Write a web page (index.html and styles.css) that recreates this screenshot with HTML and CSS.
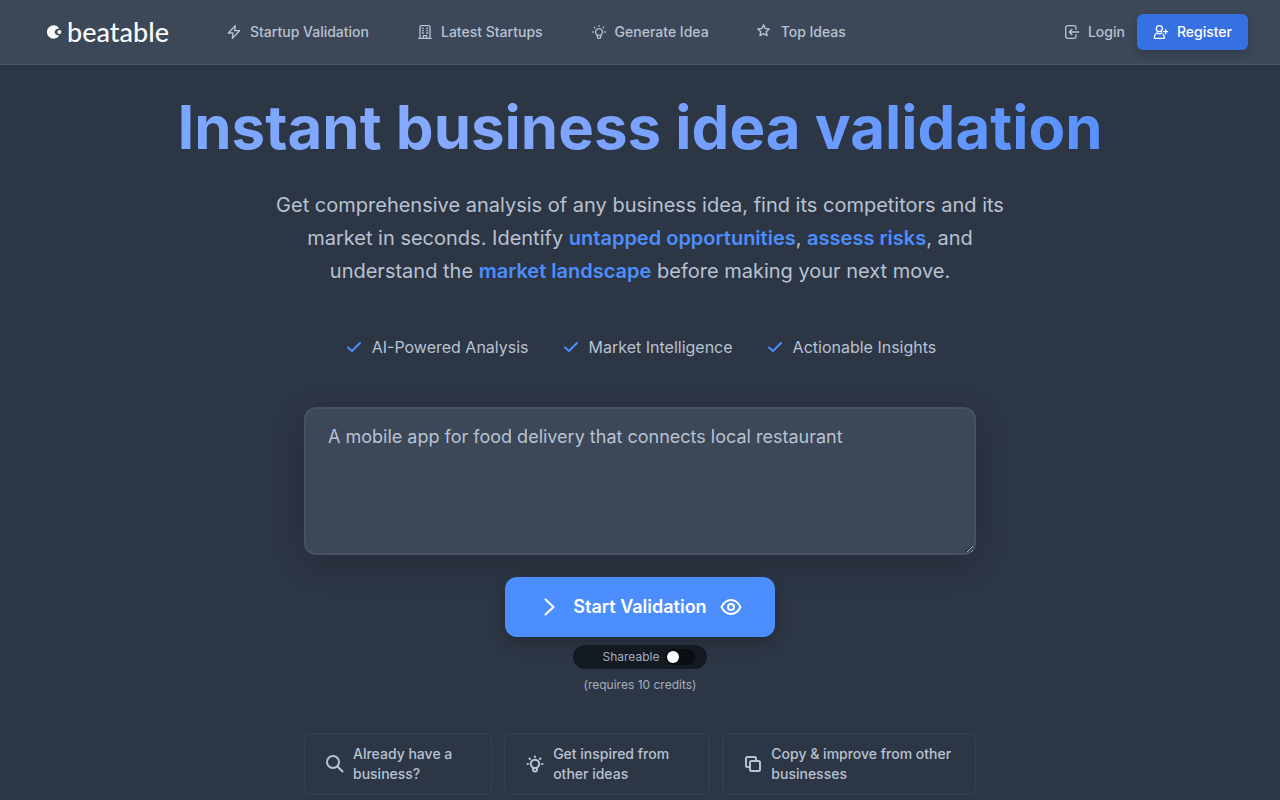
FILE: index.html
```html
<!DOCTYPE html>
<html lang="en">
  <head>
    <meta charset="UTF-8" />
    <meta name="viewport" content="width=device-width, initial-scale=1.0" />
    <title>Beatable - Instant business idea validation</title>
    <link rel="stylesheet" href="styles.css">
  </head>
  <body>
    <header class="header">
      <a href="#" class="logo">
        <svg class="logo-mark" viewBox="0 0 16 16">
          <path d="M11.600 3.500A6.700 6.700 0 1 0 11.600 12.500L11.800 11.200A3.300 3.300 0 1 1 11.800 4.800Z" fill="currentColor"/>
          <circle cx="12.400" cy="8" r="2.100" fill="currentColor"/>
        </svg>
        <span>beatable</span>
      </a>
      <nav class="nav">
        <a href="#" class="nav-link">
          <svg class="icon" viewBox="0 0 24 24"><path d="M14 2.500 3.500 13.500H10.500L9.500 21.500 20.500 10H13Z"/></svg>
          Startup Validation
        </a>
        <a href="#" class="nav-link">
          <svg class="icon" viewBox="0 0 24 24"><path d="M2.500 21.500H21.500M4.500 21.500V4.500Q4.500 2.500 6.500 2.500H17.500Q19.500 2.500 19.500 4.500V21.500M9.500 21.500V17.500H14.500V21.500M8 6.500H9.500M14.500 6.500H16M8 10H9.500M14.500 10H16M8 13.500H9.500M14.500 13.500H16"/></svg>
          Latest Startups
        </a>
        <a href="#" class="nav-link">
          <svg class="icon" viewBox="0 0 24 24"><path d="M9.500 17V16.600A5.200 5.200 0 1 1 14.500 16.600V17ZM9.500 17V19.500Q9.500 21.500 11.500 21.500H12.500Q14.500 21.500 14.500 19.500V17M12 2.500V3.500M2.500 12H3.500M20.500 12H21.500M5 5 5.800 5.800M19 5 18.200 5.800"/></svg>
          Generate Idea
        </a>
        <a href="#" class="nav-link">
          <svg class="icon icon-star" viewBox="1 1 27 27"><path d="M12 2.500 14.800 8.500 21.500 9.300 16.600 13.900 17.900 20.500 12 17.200 6.100 20.500 7.400 13.900 2.500 9.300 9.200 8.500Z"/></svg>
          Top Ideas
        </a>
      </nav>
      <div class="account">
        <a href="#" class="login">
          <svg class="icon" viewBox="0 0 24 24"><path d="M18 8V6Q18 2.500 14.500 2.500H6Q2.500 2.500 2.500 6V18Q2.500 21.500 6 21.500H14.500Q18 21.500 18 18V16M22 12H8.500M12 8 8 12 12 16"/></svg>
          Login
        </a>
        <a href="#" class="register">
          <svg class="icon" viewBox="0 0 24 24"><circle cx="9.500" cy="7" r="4.500"/><path d="M6 13.500Q2 15 2 21.500H17Q17 17.500 15 15.500M6 13.500Q9.500 16 13 13.500M19 8.500V14.500M16 11.500H22"/></svg>
          Register
        </a>
      </div>
    </header>

    <main class="hero">
      <h1 class="title">Instant business idea validation</h1>
      <p class="intro">
        Get comprehensive analysis of any business idea, find its competitors and its market in seconds. Identify <strong>untapped opportunities</strong>, <strong>assess risks</strong>, and understand the <strong>market landscape</strong> before making your next move.
      </p>

      <ul class="features">
        <li><svg class="check" viewBox="0 0 20 20"><path d="M4 10.500 8 14 16 6"/></svg>AI-Powered Analysis</li>
        <li><svg class="check" viewBox="0 0 20 20"><path d="M4 10.500 8 14 16 6"/></svg>Market Intelligence</li>
        <li><svg class="check" viewBox="0 0 20 20"><path d="M4 10.500 8 14 16 6"/></svg>Actionable Insights</li>
      </ul>

      <form class="idea-form">
        <textarea class="idea-input" aria-label="Business idea" placeholder="A mobile app for food delivery that connects local restaurant"></textarea>
        <button type="button" class="start">
          <svg class="start-icon" viewBox="0 0 24 24"><path d="M8.500 4.500 16.500 12 8.500 19.500"/></svg>
          <span>Start Validation</span>
          <svg class="start-icon" viewBox="0 0 24 24"><path d="M2.500 12Q6 5 12 5T21.500 12Q18 19 12 19T2.500 12Z"/><circle cx="12" cy="12" r="3"/></svg>
        </button>
        <label class="share">
          Shareable
          <input type="checkbox" class="switch">
        </label>
        <p class="credits">(requires 10 credits)</p>
      </form>

      <div class="links">
        <a href="#" class="link-card">
          <svg class="card-icon" viewBox="0 0 20 20"><circle cx="8" cy="8" r="6"/><path d="M12.500 12.500 17.500 17.500"/></svg>
          <span>Already have a business?</span>
        </a>
        <a href="#" class="link-card">
          <svg class="card-icon" viewBox="0 0 20 20"><path d="M8 14V13.600A4.200 4.200 0 1 1 12 13.600V14ZM8 14V15.500Q8 17.500 10 17.500T12 15.500V14M10 2.500V3M2.500 10H3M17 10H17.500M4.500 4.500 5 5M15.500 4.500 15 5"/></svg>
          <span>Get inspired from other ideas</span>
        </a>
        <a href="#" class="link-card">
          <svg class="card-icon" viewBox="0 0 20 20"><rect x="7" y="7" width="10" height="10" rx="1.500"/><path d="M6 13H4.500Q3 13 3 11.500V4.500Q3 3 4.500 3H11.500Q13 3 13 4.500V6"/></svg>
          <span>Copy &amp; improve from other businesses</span>
        </a>
      </div>
    </main>
  </body>
</html>
```

FILE: styles.css
```css
* {
  margin: 0;
  padding: 0;
  box-sizing: border-box;
}

:root {
  --bg: #2d3645;
  --surface: #3c4757;
  --line: #4a5565;
  --text: #b8c2d1;
  --blue: #4d8eff;
}

body {
  font-family: Inter, sans-serif;
  background: var(--bg);
  color: var(--text);
  min-height: 100vh;
  overflow: hidden;
}

a {
  color: inherit;
  text-decoration: none;
}

svg {
  flex-shrink: 0;
  fill: none;
  stroke: currentColor;
  stroke-width: 2;
  stroke-linecap: round;
  stroke-linejoin: round;
}

/* Header */
.header {
  display: flex;
  align-items: center;
  padding: 14px 32px;
  background: var(--surface);
  border-bottom: 1px solid var(--line);
  font-size: 14px;
  line-height: 20px;
  font-weight: 500;
}

.logo {
  display: flex;
  align-items: center;
  gap: 4px;
  margin-left: 15px;
  color: #f8fafc;
  font-family: Lato, sans-serif;
  font-size: 27px;
  line-height: 36px;
  font-weight: 500;
}

.logo-mark {
  width: 16px;
  height: 16px;
  stroke: none;
}

.nav {
  display: flex;
  gap: 48px;
  margin-left: 57px;
}

.nav-link,
.login,
.register {
  display: flex;
  align-items: center;
  gap: 8px;
}

.icon {
  width: 16px;
  height: 16px;
}

.icon-star {
  stroke-width: 2.4;
}

.account {
  display: flex;
  align-items: center;
  gap: 12px;
  margin-left: auto;
}

.register {
  padding: 8px 16px;
  border-radius: 6px;
  background: #3671e3;
  color: #fff;
  box-shadow: 0 4px 8px rgba(0, 0, 0, 0.15);
}

/* Hero */
.hero {
  display: flex;
  flex-direction: column;
  align-items: center;
  padding: 32px 16px 0;
}

.title {
  font-size: 60px;
  line-height: 60px;
  font-weight: 700;
  text-align: center;
  padding-bottom: 8px;
  background: linear-gradient(100deg, #7ba6ff, #86a9ff 30%, #5891ff);
  -webkit-background-clip: text;
  background-clip: text;
  color: transparent;
}

.intro {
  max-width: 768px;
  margin-top: 24px;
  font-size: 20px;
  line-height: 33px;
  text-align: center;
}

.intro strong {
  color: var(--blue);
  font-weight: 600;
}

.features {
  display: flex;
  gap: 32px;
  margin-top: 47px;
  list-style: none;
  font-size: 16px;
  line-height: 24px;
}

.features li {
  display: flex;
  align-items: center;
  gap: 8px;
}

.check {
  width: 20px;
  height: 20px;
  color: var(--blue);
}

/* Idea form */
.idea-form {
  display: flex;
  flex-direction: column;
  align-items: center;
  width: 100%;
  max-width: 672px;
  margin-top: 48px;
}

.idea-input {
  width: 100%;
  height: 148px;
  padding: 16px 22px;
  border: 2px solid #465261;
  border-radius: 12px;
  background: var(--surface);
  color: var(--text);
  font-family: inherit;
  font-size: 18px;
  line-height: 24px;
  box-shadow: 0 8px 32px rgba(0, 0, 0, 0.2);
  outline: none;
}

.idea-input::placeholder {
  color: var(--text);
}

.start {
  display: flex;
  align-items: center;
  gap: 12px;
  margin-top: 22px;
  padding: 16px 32px;
  border: none;
  border-radius: 12px;
  background: var(--blue);
  color: #fff;
  font-family: inherit;
  font-size: 18px;
  line-height: 28px;
  font-weight: 600;
  box-shadow: 0 6px 16px rgba(0, 0, 0, 0.2);
}

.start-icon {
  width: 24px;
  height: 24px;
}

.share {
  display: flex;
  align-items: center;
  gap: 6px;
  margin-top: 8px;
  padding: 4px 12px 4px 30px;
  border-radius: 12px;
  background: #141a22;
  color: #a3aec0;
  font-size: 12px;
  line-height: 16px;
}

.switch {
  appearance: none;
  width: 30px;
  height: 16px;
  padding: 2px;
  border-radius: 8px;
  background: #0b0e13;
}

.switch::before {
  content: '';
  display: block;
  width: 12px;
  height: 12px;
  border-radius: 50%;
  background: #fff;
}

.switch:checked::before {
  margin-left: auto;
}

.credits {
  margin-top: 8px;
  color: #a3aec0;
  font-size: 12px;
  line-height: 16px;
}

/* Bottom links */
.links {
  display: flex;
  gap: 12px;
  width: 100%;
  max-width: 672px;
  margin-top: 40px;
  font-size: 14px;
  line-height: 20px;
  font-weight: 500;
}

.link-card {
  display: flex;
  flex: 1 1 auto;
  align-items: center;
  gap: 8px;
  padding: 10px 20px;
  border: 1px solid #374150;
  border-radius: 8px;
}

.card-icon {
  width: 20px;
  height: 20px;
}
```
